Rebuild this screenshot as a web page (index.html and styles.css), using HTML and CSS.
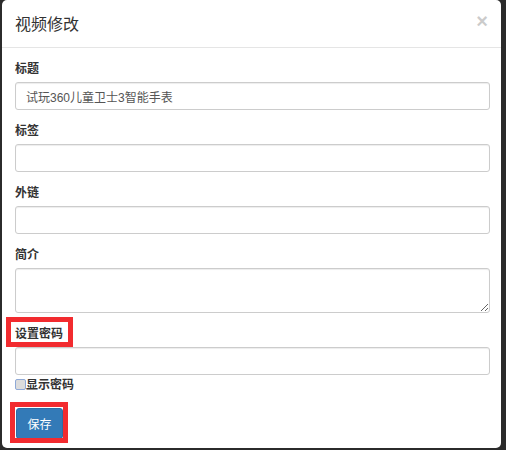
FILE: index.html
```html
<!DOCTYPE html>
<html lang="zh-CN">
<head>
  <meta charset="UTF-8">
  <meta name="viewport" content="width=device-width, initial-scale=1.0">
  <title>视频修改</title>
  <link rel="stylesheet" href="styles.css">
</head>
<body>
  <div class="modal">
    <div class="modal-header">
      <h4 class="modal-title">视频修改</h4>
      <button type="button" class="close">&times;</button>
    </div>

    <form class="modal-body">
      <div class="form-group">
        <label for="title">标题</label>
        <input type="text" id="title" class="form-control" value="试玩360儿童卫士3智能手表">
      </div>
      <div class="form-group">
        <label for="tags">标签</label>
        <input type="text" id="tags" class="form-control">
      </div>
      <div class="form-group">
        <label for="link">外链</label>
        <input type="text" id="link" class="form-control">
      </div>
      <div class="form-group">
        <label for="intro">简介</label>
        <textarea id="intro" class="form-control"></textarea>
      </div>
      <div class="form-group last">
        <span class="marked label-mark"><label for="pwd">设置密码</label></span>
        <input type="password" id="pwd" class="form-control">
      </div>
      <div class="show-pwd">
        <input type="checkbox" id="showPwd"><label for="showPwd">显示密码</label>
      </div>
      <span class="marked btn-mark"><button type="button" class="btn-primary">保存</button></span>
    </form>
  </div>
</body>
</html>
```

FILE: styles.css
```css
*,
*::before,
*::after {
  box-sizing: border-box;
}

body {
  margin: 0;
  background: #2b2b2b;
  font-family: 'Liberation Sans', 'Noto Sans CJK SC', sans-serif;
  font-size: 12px;
  color: #333;
}

.modal {
  width: 499px;
  margin-left: 2px;
  background: #fff;
  border-radius: 5px;
}

.modal-header {
  display: flex;
  align-items: center;
  justify-content: space-between;
  height: 48px;
  padding: 0 13px 0 13px;
  border-bottom: 1px solid #e5e5e5;
}

.modal-title {
  margin: 0;
  font-size: 16px;
  font-weight: normal;
  line-height: 21px;
  padding-top: 1px;
}

.close {
  background: none;
  border: none;
  padding: 0;
  margin-top: -6px;
  font-family: 'Liberation Sans', sans-serif;
  font-size: 20px;
  font-weight: bold;
  line-height: 1;
  color: #000;
  opacity: 0.2;
  cursor: pointer;
}

.modal-body {
  display: block;
  margin: 0;
  padding: 13px 11px 9px 13px;
}

.form-group {
  margin-bottom: 13px;
}

.form-group.last {
  margin-bottom: 0;
}

.form-group label {
  display: inline-block;
  margin-bottom: 4px;
  font-weight: bold;
  line-height: 17px;
}

.form-control {
  display: block;
  width: 100%;
  height: 28px;
  padding: 5px 10px;
  font-family: inherit;
  font-size: 12px;
  color: #555;
  background: #fff;
  border: 1px solid #ccc;
  border-radius: 3px;
  box-shadow: inset 0 1px 1px rgba(0, 0, 0, 0.075);
}

textarea.form-control {
  height: 45px;
}

.show-pwd {
  display: flex;
  align-items: center;
  height: 14px;
  margin-top: 2px;
}

.show-pwd input {
  appearance: none;
  -webkit-appearance: none;
  width: 11px;
  height: 11px;
  margin: 0;
  background: #dcdcdc;
  border: 1px solid #8fa9d6;
  border-radius: 2px;
}

.show-pwd label {
  font-weight: bold;
  line-height: 14px;
  padding-top: 2px;
}

.marked {
  position: relative;
  display: inline-block;
}

.marked::after {
  content: '';
  position: absolute;
  border: 5px solid #f22b2f;
  pointer-events: none;
}

.label-mark::after {
  left: -9px;
  top: -9px;
  width: 67px;
  height: 30px;
}

.btn-mark {
  margin-top: 17px;
  margin-left: 1px;
  vertical-align: top;
}

.btn-mark::after {
  left: -6px;
  top: -6px;
  width: 58px;
  height: 41px;
}

.btn-primary {
  display: block;
  width: 47px;
  height: 31px;
  padding: 0;
  font-family: inherit;
  font-size: 12px;
  color: #fff;
  background: #337ab7;
  border: 1px solid #2e6da4;
  border-radius: 3px;
  cursor: pointer;
}
```
